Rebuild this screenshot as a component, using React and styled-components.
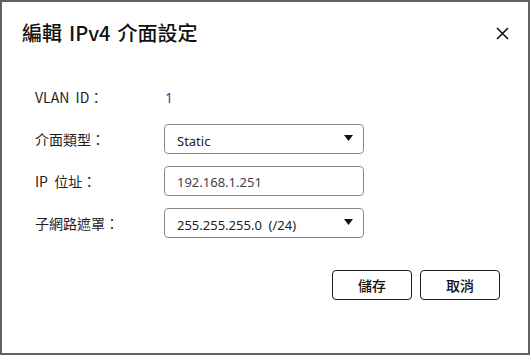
import React from 'react';
import styled, { createGlobalStyle } from 'styled-components';

const GlobalStyle = createGlobalStyle`
	html, body {
		margin: 0;
		padding: 0;
		background: #ffffff;
	}
	body {
		font-family: 'Noto Sans CJK TC', 'Noto Sans', sans-serif;
	}
`;

const Dialog = styled.div`
	width: 530px;
	height: 355px;
	box-sizing: border-box;
	border: 2px solid #616161;
	background: #ffffff;
	display: flex;
	flex-direction: column;
`;

const Header = styled.div`
	display: flex;
	align-items: center;
	justify-content: space-between;
	padding: 18px 18px 0 20px;
	height: 26px;
`;

const Title = styled.h2`
	margin: 0;
	font-size: 20px;
	font-weight: 500;
	line-height: 26px;
	color: #111111;
	white-space: pre;
	word-spacing: -1px;
`;

const CloseButton = styled.button`
	width: 16px;
	height: 16px;
	padding: 0;
	border: none;
	background: none;
	display: flex;
	align-items: center;
	justify-content: center;
	cursor: pointer;
`;

const Form = styled.div`
	display: grid;
	grid-template-columns: 129px 200px;
	grid-auto-rows: 30px;
	row-gap: 12px;
	padding: 36px 0 0 33px;
`;

const Label = styled.div`
	display: flex;
	align-items: center;
	font-size: 14px;
	color: #1e1e1e;
	white-space: pre;
`;

const Value = styled.div`
	display: flex;
	align-items: center;
	padding-left: 1px;
	font-family: 'Noto Sans', sans-serif;
	font-size: 14px;
	color: #2f3fae;
`;

const Field = styled.div`
	box-sizing: border-box;
	height: 30px;
	border: 1px solid #8a8a8a;
	border-radius: 4px;
	display: flex;
	align-items: ${p => (p.$select ? 'flex-start' : 'center')};
	justify-content: space-between;
	padding: ${p => (p.$select ? '7px 10px 0 12px' : '2px 12px 0')};
	font-family: 'Noto Sans', sans-serif;
	font-size: 13px;
	line-height: 18px;
	color: ${p => (p.$select ? '#222222' : '#444444')};
	white-space: pre;
`;

const Arrow = styled.svg`
	align-self: center;
	margin-top: -9px;
`;

const Footer = styled.div`
	display: flex;
	justify-content: flex-end;
	gap: 8px;
	padding: 32px 28px 0 0;
`;

const Button = styled.button`
	width: 80px;
	height: 30px;
	box-sizing: border-box;
	border: 1px solid #1c1c1c;
	border-radius: 4px;
	background: #ffffff;
	font-family: 'Noto Sans CJK TC', sans-serif;
	font-size: 14px;
	font-weight: 500;
	color: #111111;
	padding: 0;
	cursor: pointer;
`;

const DownArrow = () => (
	<Arrow width="9" height="6" viewBox="0 0 9 6">
		<polygon points="0,0 9,0 4.5,6" fill="#111111" />
	</Arrow>
);

const Select = ({ value }) => (
	<Field $select>
		<span>{value}</span>
		<DownArrow />
	</Field>
);

export default function App() {
	return (
		<>
			<GlobalStyle />
			<Dialog>
				<Header>
					<Title>編輯  IPv4  介面設定</Title>
					<CloseButton aria-label="close">
						<svg width="13" height="13" viewBox="0 0 13 13">
							<path d="M1 1 L12 12 M12 1 L1 12" stroke="#111111" strokeWidth="1.6" />
						</svg>
					</CloseButton>
				</Header>
				<Form>
					<Label>VLAN  ID：</Label>
					<Value>1</Value>
					<Label>介面類型：</Label>
					<Select value="Static" />
					<Label>IP  位址：</Label>
					<Field>192.168.1.251</Field>
					<Label>子網路遮罩：</Label>
					<Select value="255.255.255.0  (/24)" />
				</Form>
				<Footer>
					<Button>儲存</Button>
					<Button>取消</Button>
				</Footer>
			</Dialog>
		</>
	);
}
